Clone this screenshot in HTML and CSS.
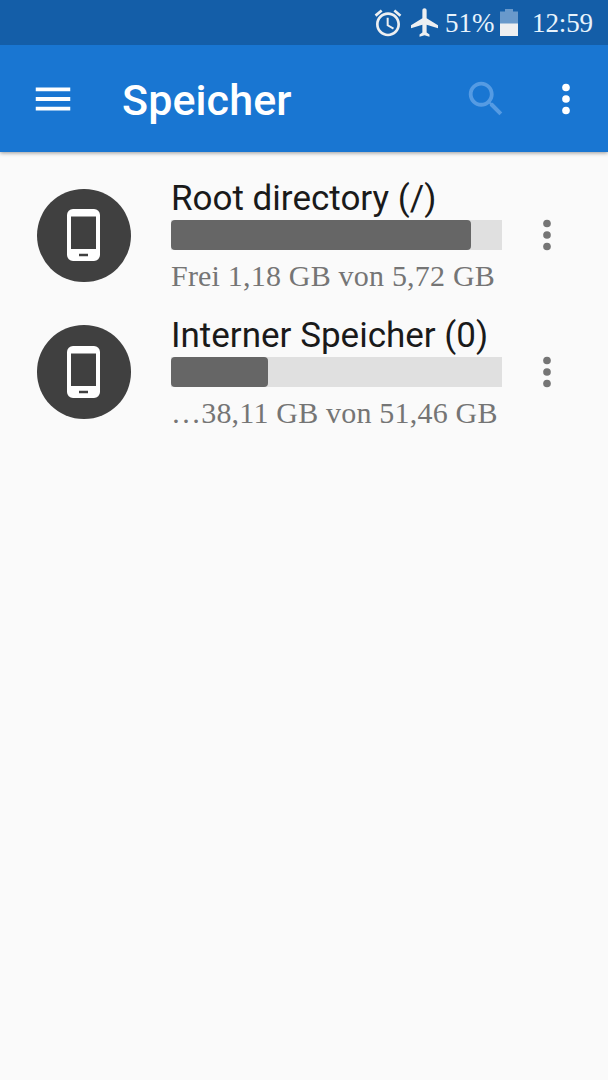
FILE: index.html
```
<!DOCTYPE html>
<html lang="de">
  <head>
    <meta charset="UTF-8" />
    <meta name="viewport" content="width=device-width, initial-scale=1.0" />
    <title>Speicher</title>
    <link rel="stylesheet" href="styles.css">
  </head>
  <body>
    <div class="status-bar">
      <svg class="alarm" viewBox="0 0 24 24"><path d="M22 5.72l-4.6-3.86-1.29 1.53 4.6 3.86L22 5.72zM7.88 3.39L6.6 1.86 2 5.71l1.29 1.53 4.59-3.85zM12.5 8H11v6l4.75 2.85.75-1.23-4-2.37V8zM12 4c-4.97 0-9 4.03-9 9s4.02 9 9 9 9-4.03 9-9-4.03-9-9-9zm0 16c-3.87 0-7-3.13-7-7s3.13-7 7-7 7 3.13 7 7-3.13 7-7 7z"/></svg>
      <svg class="airplane" viewBox="2 2 19 20"><path d="M21 16v-2l-8-5V3.5c0-.83-.67-1.5-1.5-1.5S10 2.67 10 3.5V9l-8 5v2l8-2.5V19l-2 1.5V22l3.5-1 3.5 1v-1.5L13 19v-5.5l8 2.5z"/></svg>
      <span class="percent">51%</span>
      <svg class="battery" viewBox="0 0 18 27"><path class="empty" d="M5 0h8v2.5h5V15H0V2.5h5z"/><path d="M0 14.5h18V27H0z"/></svg>
      <span class="clock">12:59</span>
    </div>

    <header>
      <svg class="icon menu" viewBox="0 0 24 24"><path d="M3 18h18v-2H3v2zm0-5h18v-2H3v2zm0-7v2h18V6H3z"/></svg>
      <h1>Speicher</h1>
      <svg class="icon search" viewBox="0 0 24 24"><path d="M15.5 14h-.79l-.28-.27C15.41 12.59 16 11.11 16 9.5 16 5.91 13.09 3 9.5 3S3 5.91 3 9.5 5.91 16 9.5 16c1.61 0 3.09-.59 4.23-1.57l.27.28v.79l5 4.99L20.49 19l-4.99-5zm-6 0C7.01 14 5 11.99 5 9.5S7.01 5 9.5 5 14 7.01 14 9.5 11.99 14 9.5 14z"/></svg>
      <svg class="icon more" viewBox="0 0 24 24"><circle cx="12" cy="6" r="2"/><circle cx="12" cy="12" r="2"/><circle cx="12" cy="18" r="2"/></svg>
    </header>

    <main>
      <section class="storage">
        <div class="badge">
          <svg viewBox="0 0 33 52"><path fill-rule="evenodd" d="M6 0h21a6 6 0 0 1 6 6v40a6 6 0 0 1-6 6H6a6 6 0 0 1-6-6V6a6 6 0 0 1 6-6zM4 7.5v32.5h25V7.5zM12 44.8v2.4h9v-2.4z"/></svg>
        </div>
        <div class="info">
          <h2>Root directory (/)</h2>
          <div class="bar"><div class="used" style="width: 90.8%"></div></div>
          <p>Frei 1,18 GB von 5,72 GB</p>
        </div>
        <svg class="icon" viewBox="0 0 24 24"><circle cx="12" cy="6" r="2"/><circle cx="12" cy="12" r="2"/><circle cx="12" cy="18" r="2"/></svg>
      </section>

      <section class="storage">
        <div class="badge">
          <svg viewBox="0 0 33 52"><path fill-rule="evenodd" d="M6 0h21a6 6 0 0 1 6 6v40a6 6 0 0 1-6 6H6a6 6 0 0 1-6-6V6a6 6 0 0 1 6-6zM4 7.5v32.5h25V7.5zM12 44.8v2.4h9v-2.4z"/></svg>
        </div>
        <div class="info">
          <h2>Interner Speicher (0)</h2>
          <div class="bar"><div class="used" style="width: 29.4%"></div></div>
          <p>…38,11 GB von 51,46 GB</p>
        </div>
        <svg class="icon" viewBox="0 0 24 24"><circle cx="12" cy="6" r="2"/><circle cx="12" cy="12" r="2"/><circle cx="12" cy="18" r="2"/></svg>
      </section>
    </main>
  </body>
</html>
```
FILE: styles.css
```
* {
  box-sizing: border-box;
}
body {
  margin: 0;
  min-height: 100vh;
  background-color: #fafafa;
  font-family: Roboto, sans-serif;
}
h1,
h2,
p {
  margin: 0;
  font-weight: normal;
  white-space: nowrap;
}
svg {
  display: block;
  flex-shrink: 0;
}
.status-bar {
  position: relative;
  z-index: 1;
  display: flex;
  align-items: center;
  height: 45px;
  padding-left: 372px;
  background-color: #145ea8;
  color: #e8f3fc;
  fill: #eeeff1;
  font-family: "Liberation Serif", serif;
  font-size: 27px;
  line-height: 45px;
}
.alarm {
  width: 32px;
  height: 32px;
}
.airplane {
  width: 27px;
  height: 29px;
  margin-left: 7px;
}
.percent {
  width: 55px;
  margin-left: 7px;
  padding-top: 2px;
}
.battery {
  width: 18px;
  height: 27px;
}
.battery .empty {
  fill: #6999cb;
}
.clock {
  margin-left: 14px;
  padding-top: 2px;
  letter-spacing: -0.1px;
}
header {
  display: flex;
  align-items: center;
  height: 107px;
  padding-left: 30px;
  background-color: #1976d2;
  color: #fff;
  fill: #fff;
  box-shadow: 0 1px 4px rgba(0, 0, 0, 0.4);
}
.icon {
  width: 46px;
  height: 46px;
}
h1 {
  width: 341px;
  margin-left: 46px;
  padding-top: 2px;
  font-size: 43px;
  font-weight: 500;
  line-height: 50px;
  letter-spacing: 0.1px;
}
.search {
  fill: #559be3;
}
.more {
  margin-left: 34px;
}
main {
  padding-top: 15px;
}
.storage {
  display: flex;
  align-items: center;
  height: 136.7px;
  padding-left: 37px;
}
.badge {
  display: flex;
  align-items: center;
  justify-content: center;
  width: 93.5px;
  height: 93.5px;
  border-radius: 50%;
  background-color: #404040;
}
.badge svg {
  width: 33px;
  height: 52px;
  fill: #fff;
}
.info {
  width: 330.5px;
  margin-left: 40.5px;
  padding-top: 0.3px;
}
h2 {
  height: 42px;
  color: #1a1a1a;
  font-size: 35px;
  line-height: 41px;
}
.bar {
  height: 30px;
  background-color: #e0e0e0;
}
.used {
  height: 100%;
  border-radius: 4px;
  background-color: #666;
}
p {
  height: 42px;
  color: #757575;
  font-family: "Liberation Serif", serif;
  font-size: 30px;
  line-height: 52px;
  letter-spacing: 0.2px;
}
.storage > .icon {
  margin-left: 22.5px;
  fill: #757575;
}
```
